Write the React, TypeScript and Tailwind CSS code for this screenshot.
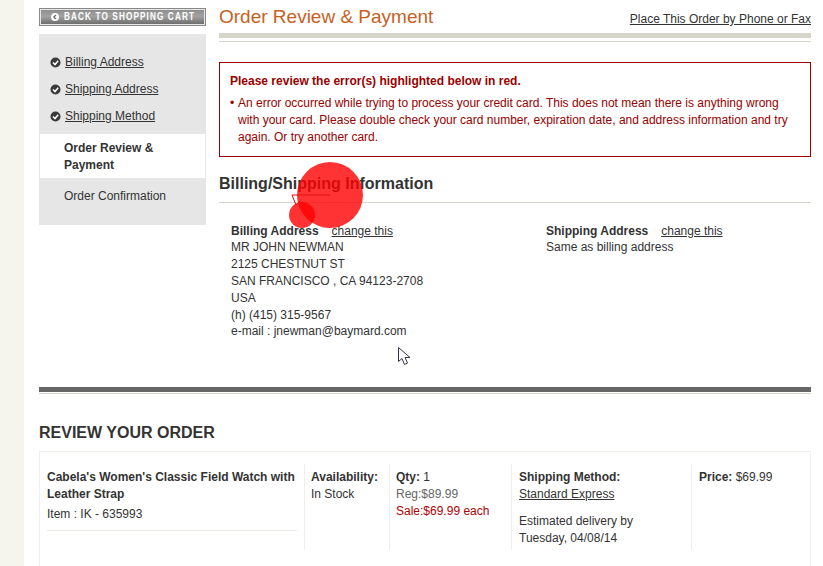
const Check = () => (
  <svg width="11" height="11" viewBox="0 0 11 11" className="shrink-0">
    <circle cx="5.5" cy="5.5" r="5" fill="#3a3a3a" />
    <path d="M3 5.5 L5 7.5 L8.2 3.8" fill="none" stroke="#fff" strokeWidth="1.6" />
  </svg>
);

const StepLink = ({ label }: { label: string }) => (
  <div className="flex h-[27px] items-center gap-[4px] pl-[10px]">
    <Check />
    <a className="underline">{label}</a>
  </div>
);

const Sidebar = () => (
  <div className="w-[167px] shrink-0 pt-[8px]">
    <div className="h-[18px] border border-[#888] bg-[#e8e8e8] p-px">
      <div className="flex h-full items-center gap-[5px] overflow-hidden bg-[linear-gradient(#8e8e8e,#a2a2a2_45%,#6e6e6e)] pl-[10px] text-[10px] font-bold leading-none tracking-[1.35px] text-white">
        <svg width="8" height="8" viewBox="0 0 8 8" className="shrink-0">
          <circle cx="4" cy="4" r="4" fill="#fff" />
          <path d="M5 2 L2.8 4 L5 6" fill="none" stroke="#666" strokeWidth="1.2" />
        </svg>
        <span className="origin-left scale-x-[0.82] whitespace-nowrap">BACK TO SHOPPING CART</span>
      </div>
    </div>
    <div className="mt-[8px] h-[191px] bg-[#e6e6e6] px-px pt-[15px]">
      <StepLink label="Billing Address" />
      <StepLink label="Shipping Address" />
      <StepLink label="Shipping Method" />
      <div className="mt-[4px] h-[44px] bg-white py-[6px] pl-[24px] pr-[30px] font-bold">Order Review &amp; Payment</div>
      <div className="pl-[24px] pt-[10px]">Order Confirmation</div>
    </div>
  </div>
);

const ErrorBox = () => (
  <div className="mt-[20px] h-[95px] border border-[#990000] pl-[10px] pr-[12px] pt-[10px] text-[#990000]">
    <p className="font-bold">Please review the error(s) highlighted below in red.</p>
    <p className="mt-[5px] pl-[8px] -indent-[8px]">
      <span className="inline-block w-[8px] indent-0">•</span>An error occurred while trying to process your credit card. This does not mean there is anything wrong with your card. Please double check your card number, expiration date, and address information and try again. Or try another card.
    </p>
  </div>
);

const Addresses = () => (
  <div className="mt-[20px] flex pl-[12px]">
    <div className="w-[315px]">
      <div className="h-[16px] leading-[16px]"><b>Billing Address</b><a className="ml-[13px] underline">change this</a></div>
      <p>MR JOHN NEWMAN</p>
      <p>2125 CHESTNUT ST</p>
      <p>SAN FRANCISCO , CA 94123-2708</p>
      <p>USA</p>
      <p>(h) (415) 315-9567</p>
      <p className="-mt-px">e-mail : jnewman@baymard.com</p>
    </div>
    <div>
      <div className="h-[16px] leading-[16px]"><b>Shipping Address</b><a className="ml-[13px] underline">change this</a></div>
      <p>Same as billing address</p>
    </div>
  </div>
);

const Main = () => (
  <div className="min-w-0 flex-1">
    <div className="flex h-[33px] justify-between pt-[6px]">
      <h1 className="text-[19px] leading-[22px] text-[#c8601e]">Order Review &amp; Payment</h1>
      <a className="pt-[5px] underline">Place This Order by Phone or Fax</a>
    </div>
    <div className="h-[5px] bg-[#d5d5cc]" />
    <div className="mt-[3px] h-px bg-[#d5d5cc]" />
    <ErrorBox />
    <h2 className="mt-[17px] h-[28px] text-[16px] font-bold leading-[20px]">Billing/Shipping Information</h2>
    <div className="h-px bg-[#d5d5cc]" />
    <Addresses />
  </div>
);

const Cell = ({ className, children }: { className: string; children: React.ReactNode }) => (
  <div className={`h-[86px] shrink-0 border-r border-[#f0f0ea] pt-[5px] ${className}`}>{children}</div>
);

const OrderRow = () => (
  <div className="mt-[8px] h-[140px] border border-[#f0f0ea] pl-[7px] pt-[12px]">
    <div className="flex">
      <Cell className="w-[258px] pr-[7px]">
        <p className="font-bold">Cabela's Women's Classic Field Watch with Leather Strap</p>
        <p className="mt-[3px]">Item : IK - 635993</p>
        <div className="mt-[7px] h-px bg-[#ecece4]" />
      </Cell>
      <Cell className="w-[85px] pl-[6px]">
        <p className="font-bold">Availability:</p>
        <p>In Stock</p>
      </Cell>
      <Cell className="w-[122px] pl-[6px]">
        <p><b>Qty:</b> 1</p>
        <p className="text-[#666]">Reg:$89.99</p>
        <p className="text-[#b00000]">Sale:$69.99 each</p>
      </Cell>
      <Cell className="w-[180px] pl-[7px] pr-[30px]">
        <p className="font-bold">Shipping Method:</p>
        <a className="underline">Standard Express</a>
        <p className="mt-[10px]">Estimated delivery by Tuesday, 04/08/14</p>
      </Cell>
      <div className="pl-[7px] pt-[5px]"><b>Price:</b> $69.99</div>
    </div>
  </div>
);

// click marker and mouse pointer from the session recording, sitting over the page
const Overlays = () => (
  <>
    <div className="absolute left-[297px] top-[162px] size-[66px] rounded-full bg-[#ff0000cc]" />
    <div className="absolute left-[289px] top-[202px] size-[26px] rounded-full bg-[#ff0000cc]" />
    <svg className="absolute left-[290px] top-[193px]" width="42" height="16" viewBox="0 0 42 16">
      <path d="M2 2 H40 M2 2 L6 12 L10 8" fill="none" stroke="#e01010" strokeWidth="1" />
    </svg>
    <svg className="absolute left-[397px] top-[346px]" width="15" height="21" viewBox="0 0 15 21">
      <path d="M1.5 1.5 V15.5 L5 12.5 L7.5 18.5 L10.5 17 L8 11.5 H13 Z" fill="#fff" stroke="#33334a" strokeWidth="1" />
    </svg>
  </>
);

export default function App() {
  return (
    <div className="relative flex h-[566px] overflow-hidden bg-white font-['Liberation_Sans',Arial,sans-serif] text-[12px] leading-[17px] text-[#333]">
      <div className="w-[24px] shrink-0 bg-[#f5f5ee]" />
      <div className="ml-[15px] w-[772px] shrink-0">
        <div className="flex h-[387px] gap-[13px]">
          <Sidebar />
          <Main />
        </div>
        <div className="h-[5px] bg-[#666]" />
        <div className="mt-px h-px bg-[#d5d5cc]" />
        <h2 className="mt-[29px] h-[20px] text-[16px] font-bold leading-[20px]">REVIEW YOUR ORDER</h2>
        <OrderRow />
      </div>
      <Overlays />
    </div>
  );
}
